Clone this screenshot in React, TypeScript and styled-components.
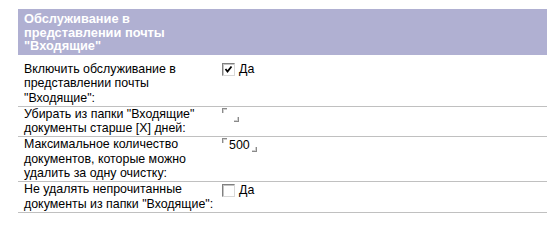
import React from 'react';
import styled, { createGlobalStyle } from 'styled-components';

const GlobalStyle = createGlobalStyle`
  html, body {
    margin: 0;
    padding: 0;
    background: #ffffff;
  }
  body {
    font-family: "Liberation Sans", Arial, sans-serif;
    font-size: 12.4px;
    color: #000000;
  }
`;

const Page = styled.div`
  padding: 9px 0 0 18px;
`;

const Header = styled.div`
  background: #b0b0d2;
  color: #ffffff;
  font-weight: bold;
  font-size: 12.8px;
  line-height: 13.5px;
  padding: 3px 6px 2px;
`;

const HeaderTitle = styled.div`
  width: 190px;
`;

const Rows = styled.div`
  margin-top: 7px;
`;

const Row = styled.div`
  display: grid;
  grid-template-columns: 204px 1fr;
  border-bottom: 1px solid #c0c0c0;
  padding: 0 0 0.5px;
  line-height: 14.5px;
`;

const Label = styled.div`
  padding: 0 6px;
`;

const Value = styled.div`
  display: flex;
  align-items: flex-start;
  padding-top: 1px;
`;

const CheckField = styled.label`
  display: inline-flex;
  align-items: center;
  gap: 4px;
  height: 14px;
`;

const Box = styled.span`
  box-sizing: border-box;
  width: 13px;
  height: 13px;
  border: 1px solid #808080;
  border-right-color: #d8d8d8;
  border-bottom-color: #d8d8d8;
  background: #ffffff;
  box-shadow: inset 1px 1px 0 #c4c4c4;
  display: inline-flex;
  align-items: center;
  justify-content: center;
`;

const Field = styled.span`
  display: inline-flex;
  height: 14px;
  gap: 1px;
`;

const Marker = styled.span<{ $end?: boolean }>`
  box-sizing: border-box;
  width: 5px;
  height: 5px;
  margin-top: ${(p) => (p.$end ? '9px' : '0')};
  border-color: #8a8a8a;
  border-style: solid;
  border-width: ${(p) => (p.$end ? '0 1px 1px 0' : '1px 0 0 1px')};
  box-shadow: ${(p) => (p.$end ? 'inset -1px -1px 0 #d0d0d0' : 'inset 1px 1px 0 #d0d0d0')};
`;

const FieldText = styled.span<{ $empty?: boolean }>`
  min-width: ${(p) => (p.$empty ? '3px' : '0')};
  padding: 0 1px;
`;

const Check = ({ checked }: { checked: boolean }) => (
  <CheckField>
    <Box>
      {checked && (
        <svg width="9" height="9" viewBox="0 0 9 9">
          <path d="M1.5 4 L3.5 6.5 L7.5 1.5" fill="none" stroke="#000" strokeWidth="1.8" />
        </svg>
      )}
    </Box>
    Да
  </CheckField>
);

const TextField = ({ value }: { value: string }) => (
  <Field>
    <Marker />
    <FieldText $empty={!value}>{value}</FieldText>
    <Marker $end />
  </Field>
);

const App = () => (
  <>
    <GlobalStyle />
    <Page>
      <Header>
        <HeaderTitle>Обслуживание в представлении почты "Входящие"</HeaderTitle>
      </Header>
      <Rows>
        <Row>
          <Label>Включить обслуживание в представлении почты "Входящие":</Label>
          <Value>
            <Check checked />
          </Value>
        </Row>
        <Row>
          <Label>Убирать из папки "Входящие" документы старше [X] дней:</Label>
          <Value>
            <TextField value="" />
          </Value>
        </Row>
        <Row>
          <Label>Максимальное количество документов, которые можно удалить за одну очистку:</Label>
          <Value>
            <TextField value="500" />
          </Value>
        </Row>
        <Row>
          <Label>Не удалять непрочитанные документы из папки "Входящие":</Label>
          <Value>
            <Check checked={false} />
          </Value>
        </Row>
      </Rows>
    </Page>
  </>
);

export default App;
